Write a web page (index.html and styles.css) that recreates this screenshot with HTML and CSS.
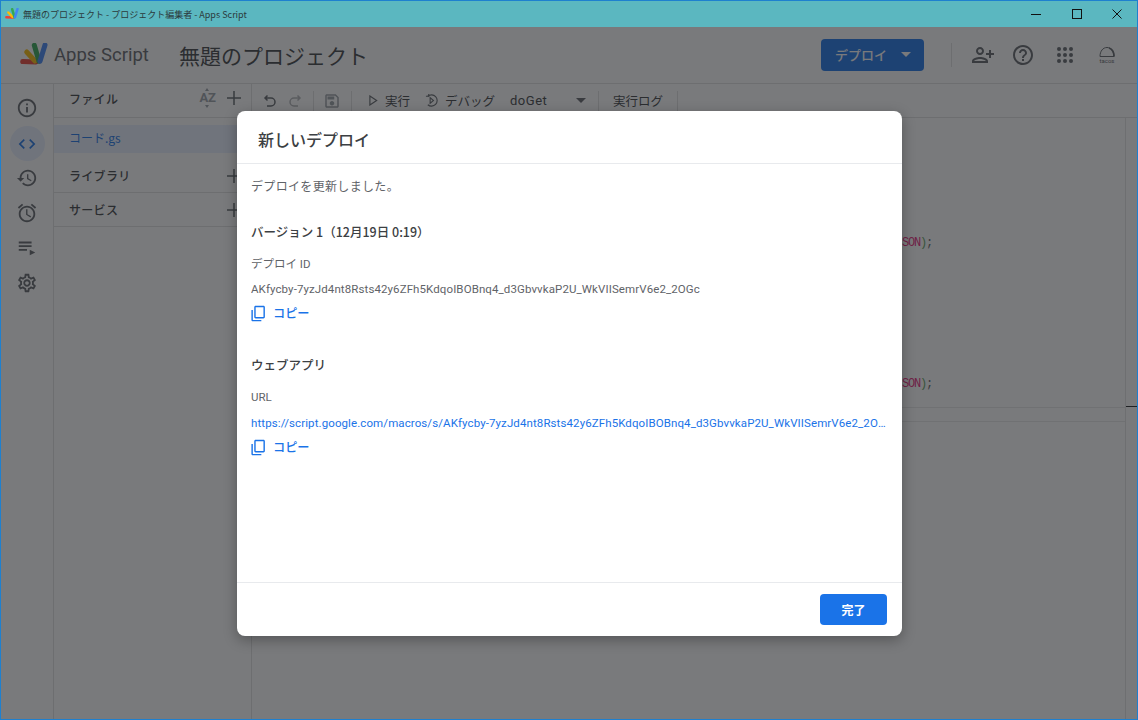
FILE: index.html
```html
<!DOCTYPE html>
<html lang="ja">
<head>
<meta charset="utf-8">
<title>無題のプロジェクト - プロジェクト編集者 - Apps Script</title>
<link rel="stylesheet" href="styles.css">
</head>
<body>
<div class="window">
  <div class="titlebar">
    <svg class="tb-logo" viewBox="0 0 28 24" width="14" height="12">
      <g fill="none" stroke-width="5" stroke-linecap="round">
        <path d="M2.700 18.500L16 19" stroke="#ea4335"/>
        <path d="M6.700 9L15 18" stroke="#fbbc04"/>
        <path d="M14.300 2.300L19 18.300" stroke="#34a853"/>
        <path d="M25 2L20 18.300" stroke="#4285f4"/>
      </g>
    </svg>
    <span class="tb-text">無題のプロジェクト - プロジェクト編集者 - Apps Script</span>
    <div class="tb-controls">
      <svg class="tb-btn" viewBox="0 0 10 10" width="10" height="10"><path d="M0 5.500h10" stroke="#111" fill="none"/></svg>
      <svg class="tb-btn" viewBox="0 0 10 10" width="10" height="10"><rect x=".5" y=".5" width="9" height="9" stroke="#111" fill="none"/></svg>
      <svg class="tb-btn" viewBox="0 0 10 10" width="10" height="10"><path d="M.5.5l9 9M9.500.5l-9 9" stroke="#111" fill="none"/></svg>
    </div>
  </div>
  <div class="app">
    <header class="header">
      <svg class="logo" viewBox="0 0 28 24" width="28" height="24">
        <g fill="none" stroke-width="5" stroke-linecap="round">
          <path d="M2.700 18.500L16 19" stroke="#ea4335"/>
          <path d="M6.700 9L15 18" stroke="#fbbc04"/>
          <path d="M14.300 2.300L19 18.300" stroke="#34a853"/>
          <path d="M25 2L20 18.300" stroke="#4285f4"/>
        </g>
      </svg>
      <span class="brand">Apps Script</span>
      <span class="project">無題のプロジェクト</span>
      <button class="deploy"><span>デプロイ</span><i class="caret caret-light"></i></button>
      <div class="h-divider"></div>
      <svg class="h-icon h-person" viewBox="0 0 24 24" width="24" height="24"><path transform="translate(24 0) scale(-1 1)" d="M15 12c2.210 0 4-1.790 4-4s-1.790-4-4-4-4 1.790-4 4 1.790 4 4 4zm0-6c1.100 0 2 .9 2 2s-.9 2-2 2-2-.9-2-2 .9-2 2-2zm0 8c-2.670 0-8 1.340-8 4v2h16v-2c0-2.660-5.330-4-8-4zm-6 4c.22-.72 3.310-2 6-2 2.700 0 5.800 1.290 6 2H9zm-3-3v-3h3v-2H6V7H4v3H1v2h3v3h2z"/></svg>
      <svg class="h-icon" viewBox="0 0 24 24" width="24" height="24"><path d="M11 18h2v-2h-2v2zm1-16C6.480 2 2 6.480 2 12s4.480 10 10 10 10-4.480 10-10S17.520 2 12 2zm0 18c-4.410 0-8-3.590-8-8s3.590-8 8-8 8 3.590 8 8-3.590 8-8 8zm0-14c-2.210 0-4 1.790-4 4h2c0-1.100.9-2 2-2s2 .9 2 2c0 2-3 1.750-3 5h2c0-2.250 3-2.500 3-5 0-2.210-1.790-4-4-4z"/></svg>
      <svg class="h-icon" viewBox="0 0 24 24" width="24" height="24"><g><circle cx="6" cy="6" r="2"/><circle cx="12" cy="6" r="2"/><circle cx="18" cy="6" r="2"/><circle cx="6" cy="12" r="2"/><circle cx="12" cy="12" r="2"/><circle cx="18" cy="12" r="2"/><circle cx="6" cy="18" r="2"/><circle cx="12" cy="18" r="2"/><circle cx="18" cy="18" r="2"/></g></svg>
      <svg class="h-icon tacos" viewBox="0 0 24 24" width="24" height="24"><path d="M5 13.500C5 8 8 4.500 12 4.500s7 3.500 7 9z" fill="none" stroke="#5f6368"/><path d="M14 5c3 1 5 4 5 8.500" fill="none" stroke="#5f6368" stroke-width="1.800"/><text x="12" y="19.500" text-anchor="middle" class="tacos-text">tacos</text></svg>
    </header>
    <div class="main">
      <nav class="rail">
        <svg class="r-icon" viewBox="0 0 24 24" width="22" height="22"><path d="M11 7h2v2h-2zm0 4h2v6h-2zm1-9C6.480 2 2 6.480 2 12s4.480 10 10 10 10-4.480 10-10S17.520 2 12 2zm0 18c-4.410 0-8-3.590-8-8s3.590-8 8-8 8 3.590 8 8-3.590 8-8 8z"/></svg>
        <div class="r-active"><svg viewBox="0 0 24 24" width="20" height="20"><path d="M9.400 16.600L4.800 12l4.600-4.600L8 6l-6 6 6 6 1.400-1.400zm5.200 0l4.600-4.600-4.600-4.600L16 6l6 6-6 6-1.400-1.400z"/></svg></div>
        <svg class="r-icon" viewBox="0 0 24 24" width="22" height="22"><path d="M13 3c-4.970 0-9 4.030-9 9H1l3.890 3.890.07.14L9 12H6c0-3.870 3.130-7 7-7s7 3.130 7 7-3.130 7-7 7c-1.930 0-3.680-.79-4.940-2.060l-1.420 1.420C8.270 19.990 10.510 21 13 21c4.970 0 9-4.030 9-9s-4.030-9-9-9zm-1 5v5l4.280 2.540.72-1.210-3.500-2.080V8H12z"/></svg>
        <svg class="r-icon" viewBox="0 0 24 24" width="22" height="22"><path d="M22 5.720l-4.600-3.860-1.290 1.530 4.600 3.860L22 5.720zM7.880 3.390L6.600 1.860 2 5.710l1.290 1.530 4.590-3.850zM12.500 8H11v6l4.750 2.850.75-1.230-4-2.370V8zM12 4c-4.970 0-9 4.030-9 9s4.030 9 9 9 9-4.030 9-9-4.030-9-9-9zm0 16c-3.870 0-7-3.130-7-7s3.130-7 7-7 7 3.130 7 7-3.130 7-7 7z"/></svg>
        <svg class="r-icon" viewBox="0 0 24 24" width="22" height="22"><path d="M3 5h14v2H3zm0 4h14v2H3zm0 4h9v2H3zm12 1v6l6-3z"/></svg>
        <svg class="r-icon" viewBox="0 0 24 24" width="22" height="22"><path d="M19.430 12.980c.04-.32.07-.64.07-.98 0-.34-.03-.66-.07-.98l2.110-1.650c.19-.15.24-.42.12-.64l-2-3.460c-.09-.16-.26-.25-.44-.25-.06 0-.12.01-.17.03l-2.490 1c-.52-.4-1.080-.73-1.690-.98l-.38-2.650C14.460 2.180 14.250 2 14 2h-4c-.25 0-.46.18-.49.42l-.38 2.650c-.61.25-1.170.59-1.690.98l-2.490-1c-.06-.02-.12-.03-.18-.03-.17 0-.34.09-.43.25l-2 3.460c-.13.22-.07.49.12.64l2.110 1.650c-.04.32-.07.65-.07.98 0 .33.03.66.07.98l-2.110 1.650c-.19.15-.24.42-.12.64l2 3.460c.09.16.26.25.44.25.06 0 .12-.01.17-.03l2.490-1c.52.4 1.080.73 1.690.98l.38 2.650c.03.24.24.42.49.42h4c.25 0 .46-.18.49-.42l.38-2.650c.61-.25 1.170-.59 1.690-.98l2.490 1c.06.02.12.03.18.03.17 0 .34-.09.43-.25l2-3.460c.12-.22.07-.49-.12-.64l-2.110-1.650zm-1.980-1.710c.04.31.05.52.05.73 0 .21-.02.43-.05.73l-.14 1.130.89.7 1.080.84-.7 1.210-1.270-.51-1.040-.42-.9.68c-.43.32-.84.56-1.250.73l-1.060.43-.16 1.130-.2 1.350h-1.400l-.19-1.350-.16-1.130-1.060-.43c-.43-.18-.83-.41-1.230-.71l-.91-.7-1.060.43-1.270.51-.7-1.210 1.080-.84.89-.7-.14-1.130c-.03-.31-.05-.54-.05-.74s.02-.43.05-.73l.14-1.130-.89-.7-1.080-.84.7-1.210 1.270.51 1.040.42.9-.68c.43-.32.84-.56 1.250-.73l1.060-.43.16-1.130.2-1.350h1.390l.19 1.350.16 1.130 1.060.43c.43.18.83.41 1.230.71l.91.7 1.060-.43 1.270-.51.7 1.210-1.070.85-.89.7.14 1.130zM12 8c-2.210 0-4 1.790-4 4s1.790 4 4 4 4-1.790 4-4-1.790-4-4-4zm0 6c-1.100 0-2-.9-2-2s.9-2 2-2 2 .9 2 2-.9 2-2 2z"/></svg>
      </nav>
      <aside class="files">
        <div class="f-head">
          <span class="f-title">ファイル</span>
          <span class="az">AZ</span>
          <svg class="plus" viewBox="0 0 14 14" width="14" height="14"><path d="M7 0v14M0 7h14" stroke="#5f6368" stroke-width="1.500"/></svg>
        </div>
        <div class="f-spacer"></div>
        <div class="f-row">コード.gs</div>
        <div class="f-section f-first"><span class="f-title">ライブラリ</span><svg class="plus" viewBox="0 0 14 14" width="14" height="14"><path d="M7 0v14M0 7h14" stroke="#5f6368" stroke-width="1.500"/></svg></div>
        <div class="f-section"><span class="f-title">サービス</span><svg class="plus" viewBox="0 0 14 14" width="14" height="14"><path d="M7 0v14M0 7h14" stroke="#5f6368" stroke-width="1.500"/></svg></div>
      </aside>
      <section class="editor">
        <div class="toolbar">
          <svg class="t-icon t-undo" viewBox="0 0 16 16" width="16" height="16"><path d="M5.500 2.500L3 5l2.500 2.500M3.500 5h5.500a3.500 3.500 0 0 1 0 8H5" fill="none" stroke="#5f6368" stroke-width="1.500"/></svg>
          <svg class="t-icon t-redo" viewBox="0 0 16 16" width="16" height="16"><path d="M10.500 2.500L13 5l-2.500 2.500M12.500 5H7a3.500 3.500 0 0 0 0 8h4" fill="none" stroke="#b3b5b8" stroke-width="1.500"/></svg>
          <i class="t-div t-div-a"></i>
          <svg class="t-save" viewBox="0 0 24 24" width="18" height="18"><path d="M17 3H5c-1.110 0-2 .9-2 2v14c0 1.100.89 2 2 2h14c1.100 0 2-.9 2-2V7l-4-4zm2 16H5V5h11.170L19 7.830V19zm-7-7c-1.660 0-3 1.340-3 3s1.340 3 3 3 3-1.340 3-3-1.340-3-3-3zM6 6h9v4H6z"/></svg>
          <i class="t-div t-div-b"></i>
          <svg class="t-run" viewBox="0 0 10 12" width="9" height="11"><path d="M1 1l7.500 5L1 11z" fill="none" stroke="#5f6368" stroke-width="1.300"/></svg>
          <span class="t-label t-exec">実行</span>
          <svg class="t-debug" viewBox="0 0 16 16" width="15" height="15"><path d="M3 3.500A6 6 0 1 1 3 12.500" fill="none" stroke="#5f6368" stroke-width="1.200"/><path d="M1 3.500h3v-2.500M5.500 5l3.500 3-3.500 3z" fill="none" stroke="#5f6368" stroke-width="1.200"/></svg>
          <span class="t-label t-debug-l">デバッグ</span>
          <span class="t-label t-fn">doGet</span>
          <i class="caret caret-dark"></i>
          <i class="t-div t-div-c"></i>
          <span class="t-label t-log">実行ログ</span>
          <i class="t-div t-div-d"></i>
        </div>
        <div class="code">
          <div class="code-line code-first"><span class="c-str">JSON</span><span class="c-par">)</span><span class="c-sem">;</span></div>
          <div class="code-line code-second"><span class="c-str">JSON</span><span class="c-par">)</span><span class="c-sem">;</span></div>
          <div class="code-rule code-rule-a"></div>
          <div class="code-rule code-rule-b"></div>
        </div>
        <div class="minimap"><i class="mini-tick"></i></div>
      </section>
    </div>
    <div class="overlay"></div>
    <div class="modal">
      <div class="m-head">新しいデプロイ</div>
      <div class="m-body">
        <p class="m-msg">デプロイを更新しました。</p>
        <h3 class="m-h m-h1">バージョン 1（12月19日 0:19）</h3>
        <div class="m-label">デプロイ ID</div>
        <div class="m-value">AKfycby-7yzJd4nt8Rsts42y6ZFh5KdqoIBOBnq4_d3GbvvkaP2U_WkVIISemrV6e2_2OGc</div>
        <div class="copy"><svg viewBox="0 0 24 24" width="17" height="17"><path transform="translate(0 24) scale(1 -1)" d="M16 1H4c-1.100 0-2 .9-2 2v14h2V3h12V1zm3 4H8c-1.100 0-2 .9-2 2v14c0 1.100.9 2 2 2h11c1.100 0 2-.9 2-2V7c0-1.100-.9-2-2-2zm0 16H8V7h11v14z"/></svg><span>コピー</span></div>
        <h3 class="m-h m-h2">ウェブアプリ</h3>
        <div class="m-label">URL</div>
        <div class="m-value m-link">https://script.google.com/macros/s/AKfycby-7yzJd4nt8Rsts42y6ZFh5KdqoIBOBnq4_d3GbvvkaP2U_WkVIISemrV6e2_2OGc</div>
        <div class="copy"><svg viewBox="0 0 24 24" width="17" height="17"><path transform="translate(0 24) scale(1 -1)" d="M16 1H4c-1.100 0-2 .9-2 2v14h2V3h12V1zm3 4H8c-1.100 0-2 .9-2 2v14c0 1.100.9 2 2 2h11c1.100 0 2-.9 2-2V7c0-1.100-.9-2-2-2zm0 16H8V7h11v14z"/></svg><span>コピー</span></div>
      </div>
      <div class="m-foot"><button class="done">完了</button></div>
    </div>
  </div>
</div>
</body>
</html>
```
FILE: styles.css
```css
* { box-sizing: border-box; }
html, body { margin: 0; height: 100%; overflow: hidden; }
body { font-family: Roboto, "Noto Sans CJK JP", sans-serif; color: #3c4043; background: #fff; }
.window { width: 1138px; height: 720px; display: flex; flex-direction: column; border: 1px solid #1e80cf; }
.titlebar { height: 26px; flex: none; background: #5bb7c0; display: flex; align-items: center; padding-left: 4px; }
.tb-logo { flex: none; }
.tb-text { margin-left: 4px; font-size: 9px; font-family: "Noto Sans CJK JP", sans-serif; color: #2c3a3c; white-space: nowrap; }
.tb-controls { margin-left: auto; display: flex; gap: 30.500px; padding-right: 15px; }
.tb-btn { display: block; }
.app { flex: 1; min-height: 0; position: relative; display: flex; flex-direction: column; background: #fff; }
.header { height: 57px; flex: none; display: flex; align-items: center; border-bottom: 1px solid #e0e0e0; padding-left: 19px; padding-bottom: 1px; }
.logo { flex: none; }
.brand { margin-left: 6px; font-size: 18.500px; color: #5f6368; font-family: Roboto, sans-serif; white-space: nowrap; width: 125px; }
.project { font-size: 21px; color: #3c4043; font-family: "Noto Sans CJK JP", sans-serif; white-space: nowrap; }
.deploy { margin-left: auto; width: 103px; height: 32px; border: 0; border-radius: 4px; background: #1a73e8; color: #fff; display: flex; align-items: center; padding: 0 0 0 14px; font: 500 13px "Noto Sans CJK JP", sans-serif; }
.caret { display: block; width: 0; height: 0; border-left: 5px solid transparent; border-right: 5px solid transparent; border-top: 5px solid #5f6368; }
.caret-light { border-top-color: #fff; margin-left: 14px; }
.h-divider { width: 1px; height: 24px; background: #e0e0e0; margin: 0 19px 0 27px; }
.h-icon { fill: #5f6368; margin-right: 18px; flex: none; }
.h-person { margin-right: 16px; }
.h-icon.tacos { margin: 0 18px 0 0; }
.tacos-text { font: 6px Roboto, sans-serif; fill: #5f6368; }
.main { flex: 1; min-height: 0; display: flex; }
.rail { width: 53px; flex: none; border-right: 1px solid #e0e0e0; display: flex; flex-direction: column; align-items: center; padding-top: 13px; }
.r-icon { fill: #5f6368; margin-bottom: 13px; flex: none; }
.r-active { width: 35px; height: 35px; margin: -6px 0 6px; border-radius: 50%; background: #e8f0fe; display: flex; align-items: center; justify-content: center; flex: none; }
.r-active svg { fill: #1a73e8; }
.files { width: 198px; flex: none; border-right: 1px solid #e0e0e0; display: flex; flex-direction: column; }
.f-head { height: 34px; flex: none; display: flex; align-items: center; padding: 0 10px 5px 15px; border-bottom: 1px solid #e0e0e0; }
.f-title { font: 500 12px "Noto Sans CJK JP", sans-serif; letter-spacing: .3px; color: #3c4043; }
.az { position: relative; margin-left: auto; margin-right: 11px; font: 700 13px/14px Roboto, sans-serif; color: #9aa0a6; }
.az::before, .az::after { content: ""; position: absolute; left: 6px; width: 0; height: 0; border-left: 2.500px solid transparent; border-right: 2.500px solid transparent; }
.az::before { top: -3px; border-bottom: 3px solid #9aa0a6; }
.az::after { bottom: -3px; border-top: 3px solid #9aa0a6; }
.plus { flex: none; }
.f-spacer { height: 7px; flex: none; }
.f-row { height: 28px; flex: none; background: #e8f0fe; color: #1a73e8; font: 12px "Noto Sans CJK JP", sans-serif; padding: 0 0 3px 15px; display: flex; align-items: center; }
.f-section { height: 34px; flex: none; border-bottom: 1px solid #e0e0e0; display: flex; align-items: center; justify-content: space-between; padding: 0 10px 0 15px; }
.f-first { height: 40px; padding-top: 6px; }
.editor { flex: 1; min-width: 0; display: flex; flex-direction: column; position: relative; }
.toolbar { height: 34px; flex: none; display: flex; align-items: center; border-bottom: 1px solid #e0e0e0; padding: 0 0 0 10px; }
.t-icon { flex: none; }
.t-redo { margin-left: 9px; }
.t-div { display: block; width: 1px; height: 20px; background: #e0e0e0; flex: none; }
.t-div-a { margin-left: 10px; }
.t-save { fill: #9aa0a6; margin-left: 9px; flex: none; }
.t-div-b { margin-left: 10px; }
.t-run { margin-left: 17px; flex: none; }
.t-label { font: 12.500px "Noto Sans CJK JP", sans-serif; color: #3c4043; white-space: nowrap; }
.t-exec { margin-left: 7px; }
.t-debug { margin-left: 15px; flex: none; }
.t-debug-l { margin-left: 5px; }
.t-fn { margin-left: 15px; font: 13px Roboto, sans-serif; letter-spacing: .5px; width: 66px; }
.caret-dark { margin-left: 0; }
.t-div-c { margin-left: 12px; }
.t-log { margin-left: 14px; }
.t-div-d { margin-left: 14px; }
.code { flex: 1; display: flex; flex-direction: column; margin-right: 12px; align-items: flex-start; padding-left: 644px; font: 12px "Liberation Mono", monospace; letter-spacing: -1.200px; }
.code-line { height: 14px; line-height: 14px; white-space: nowrap; }
.code-first { margin-top: 118px; }
.code-second { margin-top: 127px; }
.code-rule { height: 1px; background: #e8e8e8; align-self: stretch; margin-left: -644px; }
.code-rule-a { margin-top: 16px; }
.code-rule-b { margin-top: 13px; }
.c-str { color: #e8247c; }
.c-par { color: #5f9f5f; }
.c-sem { color: #5f6368; }
.minimap { position: absolute; top: 34px; right: 0; bottom: 0; width: 12px; border-left: 1px solid #e4e4e4; }
.mini-tick { position: absolute; left: 0; right: 0; top: 288px; height: 1px; background: #202124; }
.overlay { position: absolute; inset: 0; background: rgba(32, 33, 36, .6); }
.modal { position: absolute; left: 236px; top: 84px; width: 665px; height: 525px; background: #fff; border-radius: 8px; box-shadow: 0 4px 14px rgba(0, 0, 0, .3); display: flex; flex-direction: column; }
.m-head { height: 53px; flex: none; border-bottom: 1px solid #e8eaed; padding: 3px 21px 0; display: flex; align-items: center; font: 500 16px "Noto Sans CJK JP", sans-serif; color: #3c4043; }
.m-body { flex: 1; min-height: 0; padding: 0 15px 0 14px; }
.m-msg { margin: 13px 0 0; font: 12px/18px "Noto Sans CJK JP", sans-serif; letter-spacing: .33px; color: #5f6368; }
.m-h { margin: 0; font: 500 12.500px/18px "Noto Sans CJK JP", Roboto, sans-serif; color: #3c4043; }
.m-h1 { margin-top: 28px; }
.m-h2 { margin-top: 34px; }
.m-label { margin-top: 14px; font: 11.500px/18px Roboto, "Noto Sans CJK JP", sans-serif; color: #5f6368; }
.m-value { margin-top: 7px; font: 11.500px/18px Roboto, sans-serif; letter-spacing: .1px; color: #5f6368; white-space: nowrap; overflow: hidden; text-overflow: ellipsis; }
.m-value.m-link { margin-top: 8px; color: #1a73e8; }
.copy { margin-top: 6px; display: flex; align-items: center; color: #1a73e8; font: 500 12.200px/18px "Noto Sans CJK JP", sans-serif; }
.copy svg { fill: #1a73e8; margin-left: -1px; margin-right: 6px; flex: none; }
.m-foot { height: 54px; flex: none; border-top: 1px solid #e8eaed; display: flex; align-items: flex-start; justify-content: flex-end; padding: 11px 15px 0; }
.done { width: 67px; height: 31px; border: 0; border-radius: 4px; background: #1a73e8; color: #fff; font: 700 12px "Noto Sans CJK JP", sans-serif; }
```
